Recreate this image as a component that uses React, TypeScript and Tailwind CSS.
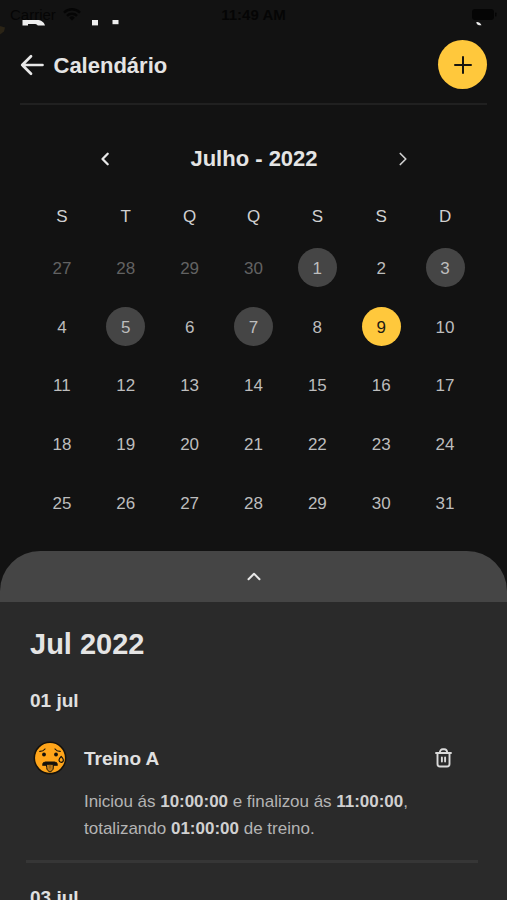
type DayKind = "outside" | "default" | "marked" | "today";

interface Day {
  label: number;
  kind: DayKind;
}

const weekdays = ["S", "T", "Q", "Q", "S", "S", "D"];
const trainingDays = [1, 3, 5, 7];
const today = 9;

const dayStyles: Record<DayKind, string> = {
  outside: "text-[#626262]",
  default: "text-[#bdbdbd]",
  marked: "bg-[#454545] text-[#bdbdbd]",
  today: "bg-[#ffc83c] text-[#1c1a14]",
};

function getKind(day: number): DayKind {
  if (day === today) return "today";
  return trainingDays.includes(day) ? "marked" : "default";
}

const days: Day[] = [
  ...[27, 28, 29, 30].map((label): Day => ({ label, kind: "outside" })),
  ...Array.from({ length: 31 }, (_, i): Day => ({ label: i + 1, kind: getKind(i + 1) })),
];

function StatusBar() {
  return (
    <div className="grid h-7 shrink-0 grid-cols-3 items-center px-2.5 text-[15px] leading-none text-[#050505]">
      <div className="flex items-center gap-[7px]">
        <span>Carrier</span>
        <svg width="18" height="13" viewBox="0 0 18 13" fill="none" stroke="currentColor" strokeWidth="2.4">
          <path d="M1 4.6a11.4 11.4 0 0 1 16 0" />
          <path d="M4 7.8a7.2 7.2 0 0 1 10 0" />
          <path d="M9 12.5 6.2 9.7a4 4 0 0 1 5.6 0z" fill="currentColor" stroke="none" />
        </svg>
      </div>
      <span className="text-center font-bold">11:49 AM</span>
      <div className="flex justify-end">
        <svg width="25" height="11" viewBox="0 0 25 11" fill="currentColor">
          <rect width="22" height="11" rx="3" />
          <rect x="23" y="3.5" width="1.5" height="4" rx="0.7" />
        </svg>
      </div>
    </div>
  );
}

// Top edge of the home screen, still visible above the modal
function ScreenBehind() {
  return (
    <svg className="absolute left-0 top-0 h-10 w-full" viewBox="0 0 507 40">
      <path d="M22.5 20H37c4 0 7 2 8 5.4h-7.200c-1-1-2-1.300-3.800-1.300h-6v1.300h-5.500z" fill="#eee" />
      <rect x="92" y="20" width="6" height="5.400" fill="#eee" />
      <rect x="112.500" y="20" width="6" height="4.200" fill="#eee" />
      <path d="M476.300 22.300c1.500-.7 3.800.6 5.200 3h-2.500c-1.600-.3-2.500-1.500-2.700-3z" fill="#eee" />
      <path d="M0 26l5 1.500-1 4-4 3z" fill="#2b2416" />
    </svg>
  );
}

function TiredFace() {
  return (
    <svg width="34" height="34" viewBox="0 0 34 34" fill="none" stroke="#15120c" strokeLinecap="round">
      <circle cx="17" cy="17" r="15.700" fill="#ffa51a" strokeWidth="1.500" />
      <path d="M6.800 10.400c2.200 0 4-.9 5.200-2.400M22 8c1.200 1.500 3 2.400 5.200 2.400" strokeWidth="1.200" />
      <circle cx="11" cy="13.500" r="1.900" fill="#15120c" stroke="none" />
      <circle cx="23" cy="13.500" r="1.900" fill="#15120c" stroke="none" />
      <path d="M12.500 21h9c1.800 0 2.700 1.200 2.700 3.200H9.800c0-2 .9-3.200 2.700-3.200z" fill="#15120c" strokeWidth="1.200" strokeLinejoin="round" />
      <path d="M13.700 23.300h6.600v3.600c0 2.300-1.800 3.200-3.300 4.200-1.500-1-3.300-1.900-3.300-4.200z" fill="#bd7b1a" strokeWidth="1" />
      <path d="M17 24v3" stroke="#7b5216" strokeWidth="0.900" />
      <path d="M28.200 15.500c1.600 1.600 2.200 2.500 2.200 3.600a2.200 2.200 0 0 1-4.400 0c0-1.100.6-2 2.200-3.600z" fill="#ffa51a" strokeWidth="1.200" />
    </svg>
  );
}

function TrashIcon() {
  return (
    <svg width="17" height="20" viewBox="0 0 17 20" fill="none" stroke="#dadada" strokeWidth="1.900" strokeLinecap="round" strokeLinejoin="round">
      <path d="M1 5h15" />
      <path d="M2.500 5v11a2.500 2.500 0 0 0 2.500 2.500h7a2.500 2.500 0 0 0 2.500-2.500V5" />
      <path d="M4.800 5c0-2.300 1.200-3.800 3-3.800h1.400c1.800 0 3 1.500 3 3.800" />
      <path d="M6.900 9.500v4M10.100 9.500v4" />
    </svg>
  );
}

function Header() {
  return (
    <header className="mx-5 flex h-[77px] shrink-0 items-center justify-between border-b-2 border-[#202020] pb-0.5">
      <div className="flex items-center gap-[7.500px]">
        <button type="button" aria-label="Voltar">
          <svg width="26" height="22" viewBox="0 0 26 22" fill="none" stroke="#e8e8e8" strokeWidth="2.700" strokeLinecap="round" strokeLinejoin="round">
            <path d="M11 2.200 2.200 11l8.800 8.800M2.200 11h20.300" />
          </svg>
        </button>
        <h1 className="pt-0.5 text-[22px] font-bold leading-none">Calendário</h1>
      </div>
      <button type="button" aria-label="Adicionar" className="flex size-[49px] items-center justify-center rounded-full bg-[#ffc83c]">
        <svg width="18" height="18" viewBox="0 0 18 18" fill="none" stroke="#17150f" strokeWidth="2" strokeLinecap="round">
          <path d="M9 1v16M1 9h16" />
        </svg>
      </button>
    </header>
  );
}

function Calendar() {
  return (
    <section className="h-[446px] shrink-0 px-[30px] pt-10">
      <div className="flex h-7 items-center justify-between pl-[69px] pr-[68px]">
        <svg width="13" height="14" viewBox="0 0 13 14" fill="none" stroke="#e8e8e8" strokeWidth="2.300" strokeLinecap="round" strokeLinejoin="round">
          <path d="M8.700 1.800 3.500 7l5.200 5.200" />
        </svg>
        <h2 className="text-[22px] font-bold leading-none">Julho - 2022</h2>
        <svg width="13" height="14" viewBox="0 0 13 14" fill="none" stroke="#d0d0d0" strokeWidth="1.700" strokeLinecap="round" strokeLinejoin="round">
          <path d="M4.300 1.500 9.800 7l-5.500 5.500" />
        </svg>
      </div>
      <div className="mt-[33px] grid grid-cols-7 text-center text-[17px] leading-[22px] text-[#d0d0d0]">
        {weekdays.map((weekday, index) => (
          <span key={`${weekday}-${index}`}>{weekday}</span>
        ))}
      </div>
      <div className="mt-2.5 grid auto-rows-[58.700px] grid-cols-7 place-items-center text-[17px]">
        {days.map((day, index) => (
          <div
            key={index}
            className={`flex size-[39px] items-center justify-center rounded-full pt-0.5 leading-none ${dayStyles[day.kind]}`}
          >
            {day.label}
          </div>
        ))}
      </div>
    </section>
  );
}

function WorkoutList() {
  return (
    <section className="min-h-0 flex-1 bg-[#2a2a2a] pl-[26px] pr-[29px]">
      <h2 className="px-1 pt-[27px] text-[29px] font-bold leading-[30px] text-[#e4e4e4]">Jul 2022</h2>
      <div className="h-[204px] border-b-[3px] border-[#363636] px-1 pt-8">
        <h3 className="text-[19px] font-bold leading-5 text-[#e0e0e0]">01 jul</h3>
        <div className="mt-[29px] flex gap-[19px]">
          <div className="ml-[3px] w-8 shrink-0 pt-px">
            <TiredFace />
          </div>
          <div className="flex-1">
            <div className="flex h-9 items-center justify-between pr-[22px]">
              <h4 className="pt-px text-[19px] font-bold leading-none text-[#e0e0e0]">Treino A</h4>
              <button type="button" aria-label="Excluir">
                <TrashIcon />
              </button>
            </div>
            <p className="mt-3 whitespace-nowrap text-[17px] leading-[27px] text-[#b4b4b4]">
              <span className="tracking-[-0.03px]">
                Iniciou ás <strong className="text-[#d0d0d0]">10:00:00</strong> e finalizou ás{" "}
                <strong className="text-[#d0d0d0]">11:00:00</strong>,
              </span>
              <br />
              totalizando <strong className="text-[#d0d0d0]">01:00:00</strong> de treino.
            </p>
          </div>
        </div>
      </div>
      <h3 className="px-1 pt-[25px] text-[19px] font-bold leading-5 text-[#e0e0e0]">03 jul</h3>
    </section>
  );
}

export default function App() {
  return (
    <main className="relative flex h-[900px] w-[507px] flex-col overflow-hidden bg-[#121212] font-['Liberation_Sans',sans-serif] text-[#e4e4e4]">
      <ScreenBehind />
      <StatusBar />
      <Header />
      <Calendar />
      <div className="flex h-[51px] shrink-0 items-center justify-center rounded-t-[40px] bg-[#454545]">
        <svg width="14" height="9" viewBox="0 0 14 9" fill="none" stroke="#e8e8e8" strokeWidth="2" strokeLinecap="round" strokeLinejoin="round">
          <path d="M1.500 7.200 7 1.700l5.500 5.500" />
        </svg>
      </div>
      <WorkoutList />
    </main>
  );
}
